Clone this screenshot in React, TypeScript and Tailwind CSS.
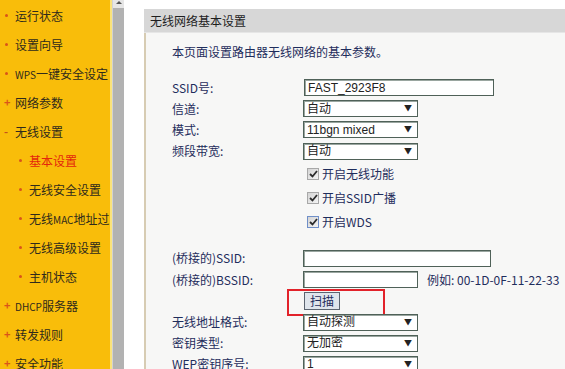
import React from "react";

const FONT = { fontFamily: '"Noto Sans CJK SC", "Liberation Sans", sans-serif' };

type NavItem = { label: string; kind: "dot" | "plus" | "minus" | "sub"; active?: boolean };

const nav: NavItem[] = [
  { label: "运行状态", kind: "dot" },
  { label: "设置向导", kind: "dot" },
  { label: "WPS一键安全设定", kind: "dot" },
  { label: "网络参数", kind: "plus" },
  { label: "无线设置", kind: "minus" },
  { label: "基本设置", kind: "sub", active: true },
  { label: "无线安全设置", kind: "sub" },
  { label: "无线MAC地址过滤", kind: "sub" },
  { label: "无线高级设置", kind: "sub" },
  { label: "主机状态", kind: "sub" },
  { label: "DHCP服务器", kind: "plus" },
  { label: "转发规则", kind: "plus" },
  { label: "安全功能", kind: "plus" },
];

function Label({ text }: { text: string }) {
  const parts = text.split(/([A-Z]+)/).filter((p) => p.length > 0);
  return (
    <>
      {parts.map((p, i) =>
        /^[A-Z]+$/.test(p) ? (
          <span key={i} className="text-[10px]">
            {p}
          </span>
        ) : (
          <span key={i}>{p}</span>
        )
      )}
    </>
  );
}

function Marker({ kind }: { kind: NavItem["kind"] }) {
  if (kind === "plus")
    return <span className="w-[9px] shrink-0 text-[11px] font-bold leading-none text-[#d9541a]">+</span>;
  if (kind === "minus")
    return <span className="w-[9px] shrink-0 text-[11px] font-bold leading-none text-[#c4521c]">-</span>;
  return (
    <span className="flex w-[9px] shrink-0 items-center">
      <span className="ml-[1px] h-[3px] w-[3px] rounded-full bg-[#d9541a]" />
    </span>
  );
}

function Sidebar() {
  return (
    <div className="flex h-full w-[112px] shrink-0 flex-col overflow-hidden border-r-2 border-[#fbe37a] bg-[#f9bd0a] pt-[1px]">
      {nav.map((n, i) => (
        <div
          key={i}
          className={`flex h-[29px] shrink-0 items-center overflow-hidden whitespace-nowrap text-[12px] ${
            n.kind === "sub" ? "pl-[18px]" : "pl-[4px]"
          } ${n.active ? "text-[#e4260c]" : "text-[#2f2a1c]"}`}
        >
          <Marker kind={n.kind} />
          <span className="ml-[2px] shrink-0">
            <Label text={n.label} />
          </span>
        </div>
      ))}
    </div>
  );
}

function Scrollbar() {
  return (
    <div className="flex h-full w-[12px] shrink-0 flex-col border-l border-[#d2d2d2] bg-[#b2b2b2]">
      <div className="flex h-[8px] items-start justify-center bg-[#e6e6e6]">
        <span className="mt-[1px] h-0 w-0 border-x-[3px] border-b-[3px] border-x-transparent border-b-[#555]" />
      </div>
    </div>
  );
}

function TextBox({ w, value }: { w: number; value?: string }) {
  return (
    <div
      className="flex h-[17px] items-center border border-[#4f6158] bg-white pl-[3px] text-[12px] text-[#222] shadow-[inset_1px_1px_0_#9aa6a0]"
      style={{ width: w, fontFamily: '"Liberation Sans", "Noto Sans CJK SC", sans-serif' }}
    >
      {value}
    </div>
  );
}

function Select({ value }: { value: string }) {
  return (
    <div className="relative flex h-[17px] w-[115px] items-center border border-[#4f6158] bg-white pl-[3px] text-[12px] text-[#222] shadow-[inset_1px_1px_0_#9aa6a0]">
      <span style={{ fontFamily: '"Liberation Sans", "Noto Sans CJK SC", sans-serif' }}>{value}</span>
      <span className="absolute right-[5px] top-[1px] text-[8px] text-[#222]">▼</span>
    </div>
  );
}

function Check({ label, focus }: { label: string; focus?: boolean }) {
  return (
    <div className="ml-[4px] flex items-center">
      <span
        className={`flex h-[12px] w-[12px] items-center justify-center border bg-gradient-to-br from-[#d4d4d4] to-[#f4f4f4] ${
          focus ? "border-[#6f8fc8]" : "border-[#a8a8a8]"
        }`}
      >
        <svg width="9" height="8" viewBox="0 0 9 8">
          <path d="M1 4 L3.5 6.5 L8 1" stroke="#2c2c2c" strokeWidth="1.8" fill="none" />
        </svg>
      </span>
      <span className="ml-[3px] text-[12px] text-[#1f2d5c]">{label}</span>
    </div>
  );
}

function Row({ h, label, children }: { h: number; label?: string; children?: React.ReactNode }) {
  return (
    <div className="flex shrink-0 items-center" style={{ height: h }}>
      <div className="w-[131px] shrink-0 whitespace-nowrap text-[12px] text-[#1f2d5c]">{label}</div>
      <div className="relative flex items-center">{children}</div>
    </div>
  );
}

export default function App() {
  return (
    <div className="flex h-[369px] w-[565px] overflow-hidden bg-white" style={FONT}>
      <Sidebar />
      <Scrollbar />
      <div className="w-[20px] shrink-0 bg-white" />
      <div className="mt-[9px] flex min-w-0 flex-1 flex-col">
        <div className="flex h-[24px] shrink-0 items-center border-b border-[#e6e6e6] bg-[#d7d7d7] pl-[6px] text-[12px] text-[#1e1e1e]">
          无线网络基本设置
        </div>
        <div className="flex flex-1 flex-col border-l-2 border-[#d7ccb3] bg-[#f7f7f6] pl-[26px] pt-[11px]">
          <div className="flex h-[16px] shrink-0 items-center whitespace-nowrap text-[12px] text-[#1f2d5c]">
            本页面设置路由器无线网络的基本参数。
          </div>
          <div className="h-[17px] shrink-0" />
          <Row h={21} label="SSID号:">
            <div className="ml-[1px]">
              <TextBox w={190} value="FAST_2923F8" />
            </div>
          </Row>
          <Row h={21} label="信道:">
            <Select value="自动" />
          </Row>
          <Row h={21} label="模式:">
            <Select value="11bgn mixed" />
          </Row>
          <Row h={22} label="频段带宽:">
            <Select value="自动" />
          </Row>
          <Row h={23}>
            <Check label="开启无线功能" />
          </Row>
          <Row h={25}>
            <Check label="开启SSID广播" />
          </Row>
          <Row h={24}>
            <Check label="开启WDS" focus />
          </Row>
          <div className="h-[13px] shrink-0" />
          <Row h={22} label="(桥接的)SSID:">
            <TextBox w={188} />
          </Row>
          <Row h={21} label="(桥接的)BSSID:">
            <TextBox w={115} />
            <span className="ml-[9px] whitespace-nowrap text-[12px] text-[#1f2d5c]">
              例如: 00-1D-0F-11-22-33
            </span>
          </Row>
          <Row h={21}>
            <div className="ml-[1px] flex h-[18px] w-[36px] items-center justify-center border border-[#5b6470] bg-[#dfe5ec] text-[12px] text-[#1f2d5c]">
              扫描
            </div>
            <div className="pointer-events-none absolute left-[-16px] top-[-3px] h-[27px] w-[98px] border-2 border-[#e2222a]" />
          </Row>
          <Row h={22} label="无线地址格式:">
            <Select value="自动探测" />
          </Row>
          <Row h={20} label="密钥类型:">
            <Select value="无加密" />
          </Row>
          <Row h={22} label="WEP密钥序号:">
            <Select value="1" />
          </Row>
        </div>
      </div>
    </div>
  );
}
